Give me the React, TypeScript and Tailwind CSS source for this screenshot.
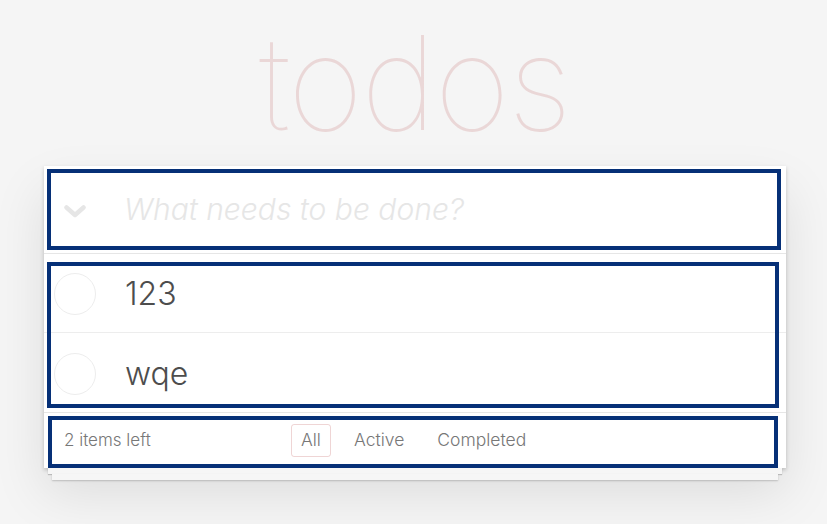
import React from 'react';

const todos = ['123', 'wqe'];

function Highlight({ className }: { className: string }) {
  return <div className={`pointer-events-none absolute border-[4px] border-[#063077] ${className}`} />;
}

export default function App() {
  return (
    <div className="min-h-[524px] bg-[#f5f5f5] font-['Inter','Helvetica_Neue',sans-serif] text-[#4d4d4d]">
      {/* header */}
      <div className="h-[166px] flex justify-center">
        <h1 className="mt-[8px] ml-[2px] text-[130px] leading-[150px] font-[100] tracking-[-2px] text-[rgba(175,47,47,0.15)]">
          todos
        </h1>
      </div>

      <div className="w-[742px] ml-[44px]">
        <div className="bg-white shadow-[0_2px_4px_rgba(0,0,0,0.2),0_25px_50px_rgba(0,0,0,0.1)]">
          {/* new todo */}
          <div className="relative h-[88px] flex items-center border-b border-[#e6e6e6]">
            <svg width="22" height="13" viewBox="0 0 22 13" className="ml-[20px] mt-[4px]">
              <path d="M2.5 2.5 L11 10 L19.5 2.5" fill="none" stroke="#e6e6e6" strokeWidth="4.5" strokeLinecap="round" strokeLinejoin="round" />
            </svg>
            <span className="ml-[38px] text-[30px] italic font-light text-[#e6e6e6]">What needs to be done?</span>
            <Highlight className="left-[3px] right-[5px] top-[3px] bottom-[3px]" />
          </div>

          {/* list */}
          <div className="relative">
            {todos.map((t, i) => (
              <div
                key={t}
                className={`h-[79px] flex items-center ${i === 0 ? 'border-b border-[#ededed]' : ''}`}
              >
                <div className="ml-[10px] mt-[2px] w-[42px] h-[42px] rounded-full border border-[#ededed]" />
                <span className="ml-[29px] mt-[2px] text-[32px] font-light">{t}</span>
              </div>
            ))}
            <Highlight className="left-[3px] right-[7px] top-[8px] bottom-[4px]" />
          </div>

          {/* footer */}
          <div className="relative h-[56px] border-t border-[#e6e6e6] flex items-center text-[17.5px] font-light text-[#777]">
            <span className="ml-[20px] w-[227px] text-[17px]">2 items left</span>
            <div className="flex items-center gap-[13px]">
              <span className="px-[9px] py-[2px] rounded-[3px] border border-[rgba(175,47,47,0.2)]">All</span>
              <span className="px-[9px] py-[2px] border border-transparent">Active</span>
              <span className="px-[9px] py-[2px] border border-transparent">Completed</span>
            </div>
            <Highlight className="left-[4px] right-[8px] top-[3px] bottom-[0px]" />
          </div>
        </div>

        {/* stacked paper edges */}
        <div className="mx-[4px] h-[6px] bg-[#f6f6f6] shadow-[0_1px_1px_rgba(0,0,0,0.2)]" />
        <div className="mx-[8px] h-[6px] bg-[#f6f6f6] shadow-[0_1px_2px_rgba(0,0,0,0.2)]" />
      </div>
    </div>
  );
}
